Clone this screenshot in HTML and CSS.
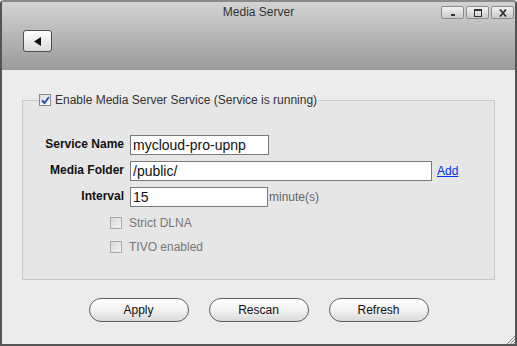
FILE: index.html
```html
<!DOCTYPE html>
<html lang="en">
<head>
    <meta charset="UTF-8">
    <title>Media Server</title>
    <link rel="stylesheet" href="styles.css">
</head>
<body>
    <div class="window">
        <div class="header">
            <div class="title-row">
                <span></span>
                <div class="title">Media Server</div>
                <div class="win-controls">
                    <button class="win-btn" title="Minimize">
                        <svg width="10" height="8" viewBox="0 0 10 8"><rect x="3" y="5" width="4" height="2" fill="#333"/></svg>
                    </button>
                    <button class="win-btn" title="Maximize">
                        <svg width="10" height="8" viewBox="0 0 10 8"><rect x="1.5" y="0.5" width="7" height="7" fill="none" stroke="#333" stroke-width="1"/><rect x="1.5" y="0.5" width="7" height="1.5" fill="#333"/></svg>
                    </button>
                    <button class="win-btn" title="Close">
                        <svg width="10" height="8" viewBox="0 0 10 8"><path d="M2 0.5 L8 7.5 M8 0.5 L2 7.5" stroke="#333" stroke-width="1.8"/></svg>
                    </button>
                </div>
            </div>
            <div class="toolbar">
                <button class="back-btn" title="Back">
                    <svg width="8" height="9" viewBox="0 0 8 9"><polygon points="7,0 7,9 0,4.5" fill="#111"/></svg>
                </button>
            </div>
        </div>

        <div class="content">
            <fieldset class="group">
                <legend class="group-legend">
                    <span class="check checked">
                        <svg width="9" height="9" viewBox="0 0 9 9"><path d="M1 4.5 L3.5 7 L8 1" fill="none" stroke="#2b4fb0" stroke-width="2"/></svg>
                    </span>
                    Enable Media Server Service (Service is running)
                </legend>

                <div class="form-grid">
                    <label class="field-label">Service Name</label>
                    <div class="field"><input class="text-input w-short" type="text" value="mycloud-pro-upnp"></div>

                    <label class="field-label">Media Folder</label>
                    <div class="field"><input class="text-input w-long" type="text" value="/public/"><a href="#" class="add-link">Add</a></div>

                    <label class="field-label">Interval</label>
                    <div class="field"><input class="text-input w-interval" type="text" value="15"><span class="unit">minute(s)</span></div>
                </div>

                <div class="options">
                    <div class="option"><span class="check disabled"></span>Strict DLNA</div>
                    <div class="option"><span class="check disabled"></span>TIVO enabled</div>
                </div>
            </fieldset>

            <div class="actions">
                <button class="pill-btn">Apply</button>
                <button class="pill-btn">Rescan</button>
                <button class="pill-btn">Refresh</button>
            </div>
        </div>

        <svg class="grip" width="10" height="10" viewBox="0 0 10 10">
            <path d="M10 2 L2 10 M10 5 L5 10 M10 8 L8 10" stroke="#888" stroke-width="1"/>
        </svg>
    </div>
</body>
</html>
```

FILE: styles.css
```css
* {
    box-sizing: border-box;
}

body {
    margin: 0;
    font-family: Arial, "Liberation Sans", sans-serif;
    font-size: 12px;
    color: #333;
    background: #ececec;
}

.window {
    position: relative;
    width: 517px;
    height: 346px;
    border: 2px solid #545454;
    border-top-color: #8a8a8a;
    border-radius: 4px 4px 0 0;
    background: #ececec;
    display: flex;
    flex-direction: column;
    overflow: hidden;
}

.header {
    height: 68px;
    background: linear-gradient(#d3d3d3, #9a9a9a);
}

.title-row {
    display: grid;
    grid-template-columns: 1fr auto 1fr;
    align-items: start;
    height: 20px;
}

.title {
    line-height: 20px;
    color: #333;
}

.win-controls {
    justify-self: end;
    display: flex;
    gap: 2px;
    margin-top: 4px;
    margin-right: 1px;
}

.win-btn {
    width: 23px;
    height: 13px;
    padding: 0;
    border: 1px solid #8c8c8c;
    border-radius: 2px;
    background: linear-gradient(#f2f2f2, #c9c9c9);
    display: flex;
    align-items: center;
    justify-content: center;
}

.toolbar {
    padding: 8px 0 0 21px;
}

.back-btn {
    width: 29px;
    height: 22px;
    padding: 0;
    border: 1px solid #4e4e4e;
    border-radius: 3px;
    background: linear-gradient(#ffffff, #dadada);
    display: flex;
    align-items: center;
    justify-content: center;
}

.content {
    flex: 1;
    display: flex;
    flex-direction: column;
}

.group {
    margin: 22px 0 0 20px;
    width: 473px;
    padding: 0 0 25px 0;
    border: 1px solid #c9c9c9;
    background: #e6e6e6;
}

.group-legend {
    margin-left: 16px;
    padding: 0 2px 0 0;
    display: flex;
    align-items: center;
    gap: 4px;
    line-height: 16px;
    color: #333;
}

.check {
    width: 12px;
    height: 12px;
    border: 1px solid #8a8a8a;
    background: linear-gradient(135deg, #dcdcdc, #ffffff);
    display: inline-flex;
    align-items: center;
    justify-content: center;
}

.check.disabled {
    border-color: #a8a8a8;
    background: linear-gradient(135deg, #d6d6d6, #f4f4f4);
}

.form-grid {
    display: grid;
    grid-template-columns: 101px auto;
    column-gap: 6px;
    row-gap: 6px;
    padding-top: 27px;
}

.field-label {
    text-align: right;
    font-weight: bold;
    color: #111;
    padding-top: 2px;
}

.field {
    display: flex;
    align-items: center;
}

.text-input {
    height: 20px;
    padding: 0 2px;
    border: 1px solid #7a7a7a;
    background: #fff;
    font-family: Arial, "Liberation Sans", sans-serif;
    font-size: 14px;
    color: #111;
    outline: none;
}

.w-short {
    width: 139px;
}

.w-long {
    width: 302px;
}

.w-interval {
    width: 138px;
}

.add-link {
    margin-left: 5px;
    color: #0033ee;
    text-decoration: underline;
}

.unit {
    margin-left: 1px;
    color: #666;
}

.options {
    padding: 9px 0 0 87px;
    display: flex;
    flex-direction: column;
    gap: 10px;
}

.option {
    display: flex;
    align-items: center;
    gap: 7px;
    line-height: 14px;
    color: #777;
}

.actions {
    display: flex;
    justify-content: center;
    gap: 20px;
    margin-top: 18px;
}

.pill-btn {
    width: 100px;
    height: 24px;
    padding: 0;
    border: 1px solid #5e5e5e;
    border-radius: 12px;
    background: linear-gradient(#ffffff 0%, #f2f2f2 50%, #d9d9d9 100%);
    font-family: Arial, "Liberation Sans", sans-serif;
    font-size: 12px;
    color: #111;
}

.grip {
    position: absolute;
    right: 0;
    bottom: 0;
}
```
